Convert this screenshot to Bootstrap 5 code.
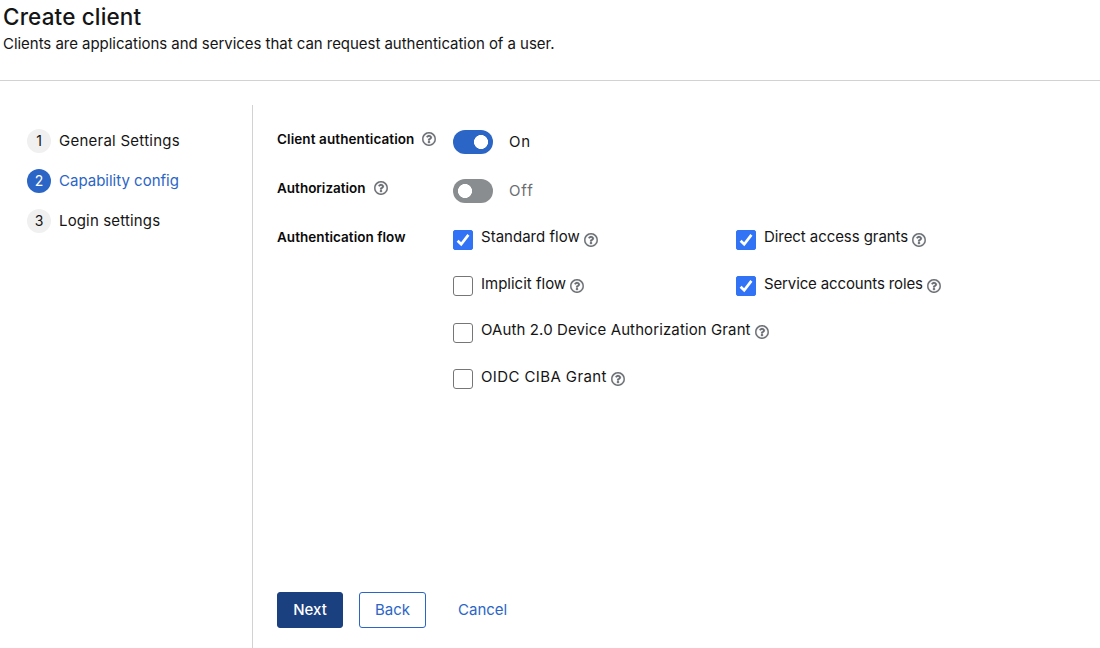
<!DOCTYPE html>
<html lang="en">
<head>
<meta charset="utf-8">
<meta name="viewport" content="width=device-width, initial-scale=1">
<title>Create client</title>
<link href="https://cdn.jsdelivr.net/npm/bootstrap@5.3.0/dist/css/bootstrap.min.css" rel="stylesheet">
<style>
  body { font-family: Inter, "Liberation Sans", sans-serif; font-size: 15px; line-height: 24px; color: #151515; background: #fff; }
  .page { height: 648px; overflow: hidden; }
  .page-head { height: 81px; padding: 2px 3px 0; border-bottom: 1px solid #d2d2d2; }
  .page-title { font-size: 22.5px; font-weight: 500; line-height: 30px; margin: 0; letter-spacing: .15px; }
  .steps { width: 253px; margin-top: 24px; padding: 24px 0 0 27px; border-right: 1px solid #d2d2d2; gap: 16px; }
  .step { color: #151515; gap: 8px; }
  .step-num { width: 24px; height: 24px; font-size: 14px; background: #f0f0f0; }
  .step.current { color: #2b65c6; }
  .step.current .step-num { background: #2b65c6; color: #fff; }
  .wizard-main { padding: 48px 24px 20px; }
  .field-row { display: grid; grid-template-columns: 176px 1fr; height: 49px; }
  .field-label { font-size: 13.5px; font-weight: 600; line-height: 20px; height: 20px; color: #0a0a0a; }
  .help { width: 14px; height: 14px; fill: #6a6e73; stroke: #6a6e73; stroke-width: 8px; flex: none; display: block; }
  .form-switch .toggle { width: 40px; height: 24px; margin: 1px 0 0; border: 0; float: none; background-color: #8a8d90; flex: none;
    background-image: radial-gradient(circle at 12px 12px, #fff 6.7px, transparent 7.3px); background-size: 100% 100%; background-position: 0 0; }
  .form-switch .toggle:checked { background-color: #2b65c6; background-image: radial-gradient(circle at 28px 12px, #fff 6.7px, transparent 7.3px); background-position: 0 0; }
  .toggle-text { margin-top: 1px; letter-spacing: .9px; }
  .off-text { color: #6a6e73; }
  .flows { display: grid; grid-template-columns: 283px 1fr; grid-auto-rows: 46.4px; margin-top: -2px; }
  .flow .form-check-input { width: 20px; height: 20px; margin: 5px 8px 0 0; border: 1px solid #767676; border-radius: 3px; float: none; flex: none; }
  .flow .form-check-input:checked { background-color: #3273f6; border-color: #3273f6; border-radius: 2px;
    background-image: url("data:image/svg+xml,%3Csvg xmlns='http://www.w3.org/2000/svg' viewBox='0 0 20 20'%3E%3Cpath d='M4 10.8l4 4L16 4.3' fill='none' stroke='%23fff' stroke-width='3'/%3E%3C/svg%3E"); }
  .flow label { margin-top: .32px; }
  .flow .help { margin: 7.6px 0 0 4px; }
  .wide { grid-column: 1 / -1; }
  .intro { letter-spacing: -.037px; }
  .t-general { letter-spacing: .25px; }
  .t-login { letter-spacing: .15px; }
  .t-client { letter-spacing: .09px; }
  .t-flow { letter-spacing: .04px; }
  .t-standard { letter-spacing: .02px; }
  .t-direct { letter-spacing: -.07px; }
  .t-service { letter-spacing: -.13px; }
  .t-device { letter-spacing: .11px; }
  .flow .t-ciba { letter-spacing: .4px; margin-top: .9px; }
  .wbtn { height: 36px; padding: 5px 15px; font-size: 15px; line-height: 24px; border-radius: 3px; }
  .btn-next { background: #1b4080; border-color: #1b4080; color: #fff; font-weight: 500; width: 66px; }
  .btn-back { border-color: #2b65c6; color: #2b65c6; width: 67px; }
  .btn-cancel { color: #2b65c6; }
</style>
</head>
<body>
<svg class="d-none" xmlns="http://www.w3.org/2000/svg">
  <symbol id="q" viewBox="4 4 504 504"><path d="M256 8C119.043 8 8 119.083 8 256c0 136.997 111.043 248 248 248s248-111.003 248-248C504 119.083 392.957 8 256 8zm0 448c-110.532 0-200-89.431-200-200 0-110.495 89.472-200 200-200 110.491 0 200 89.471 200 200 0 110.53-89.431 200-200 200zm107.244-255.2c0 67.052-72.421 68.084-72.421 92.863V300c0 6.627-5.373 12-12 12h-45.647c-6.627 0-12-5.373-12-12v-8.659c0-35.745 27.1-50.034 47.579-61.516 17.561-9.845 28.324-16.541 28.324-29.579 0-17.246-21.999-28.693-39.784-28.693-23.189 0-33.894 10.977-48.942 29.969-4.057 5.12-11.46 6.071-16.666 2.124l-27.824-21.098c-5.107-3.872-6.251-11.066-2.644-16.363C184.846 131.491 214.94 112 261.794 112c49.071 0 101.45 38.304 101.45 88.8zM298 368c0 23.159-18.841 42-42 42s-42-18.841-42-42 18.841-42 42-42 42 18.841 42 42z"/></symbol>
</svg>
<div class="page d-flex flex-column">
  <header class="page-head flex-shrink-0">
    <h1 class="page-title">Create client</h1>
    <p class="intro mb-0">Clients are applications and services that can request authentication of a user.</p>
  </header>
  <div class="d-flex flex-grow-1">
    <nav class="steps d-flex flex-column flex-shrink-0">
      <a class="step d-flex text-decoration-none" href="#"><span class="step-num rounded-circle text-center">1</span><span class="t-general">General Settings</span></a>
      <a class="step current d-flex text-decoration-none" href="#"><span class="step-num rounded-circle text-center">2</span><span>Capability config</span></a>
      <a class="step d-flex text-decoration-none" href="#"><span class="step-num rounded-circle text-center">3</span><span class="t-login">Login settings</span></a>
    </nav>
    <main class="wizard-main d-flex flex-column flex-grow-1">
      <div class="field-row">
        <div class="field-label d-flex align-items-center gap-2"><span class="t-client">Client authentication</span><svg class="help"><use href="#q"/></svg></div>
        <div class="form-switch d-flex p-0 gap-3"><input class="form-check-input toggle" type="checkbox" id="auth" checked><label class="toggle-text" for="auth">On</label></div>
      </div>
      <div class="field-row">
        <div class="field-label d-flex align-items-center gap-2"><span>Authorization</span><svg class="help"><use href="#q"/></svg></div>
        <div class="form-switch d-flex p-0 gap-3"><input class="form-check-input toggle" type="checkbox" id="authz"><label class="toggle-text off-text" for="authz">Off</label></div>
      </div>
      <div class="field-row h-auto">
        <div class="field-label"><span class="t-flow">Authentication flow</span></div>
        <div class="flows">
          <div class="flow d-flex"><input class="form-check-input" type="checkbox" id="f1" checked><label class="t-standard" for="f1">Standard flow</label><svg class="help"><use href="#q"/></svg></div>
          <div class="flow d-flex"><input class="form-check-input" type="checkbox" id="f2" checked><label class="t-direct" for="f2">Direct access grants</label><svg class="help"><use href="#q"/></svg></div>
          <div class="flow d-flex"><input class="form-check-input" type="checkbox" id="f3"><label for="f3">Implicit flow</label><svg class="help"><use href="#q"/></svg></div>
          <div class="flow d-flex"><input class="form-check-input" type="checkbox" id="f4" checked><label class="t-service" for="f4">Service accounts roles</label><svg class="help"><use href="#q"/></svg></div>
          <div class="flow d-flex wide"><input class="form-check-input" type="checkbox" id="f5"><label class="t-device" for="f5">OAuth 2.0 Device Authorization Grant</label><svg class="help"><use href="#q"/></svg></div>
          <div class="flow d-flex wide"><input class="form-check-input" type="checkbox" id="f6"><label class="t-ciba" for="f6">OIDC CIBA Grant</label><svg class="help"><use href="#q"/></svg></div>
        </div>
      </div>
      <footer class="d-flex gap-3 mt-auto">
        <button class="btn wbtn btn-next" type="button">Next</button>
        <button class="btn wbtn btn-back" type="button">Back</button>
        <button class="btn wbtn btn-cancel" type="button">Cancel</button>
      </footer>
    </main>
  </div>
</div>
<script src="https://cdn.jsdelivr.net/npm/bootstrap@5.3.0/dist/js/bootstrap.bundle.min.js"></script>
</body>
</html>
